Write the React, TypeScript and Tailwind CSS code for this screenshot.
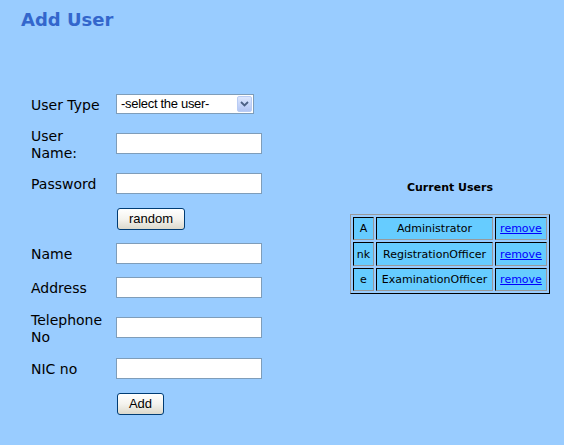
import React from "react";

const labelFont = { fontFamily: '"DejaVu Sans", Verdana, sans-serif' };

function Input() {
  return <div className="w-[146px] h-[21px] bg-white border border-[#7F9DB9] shrink-0" />;
}

function Btn({ children, w }: { children: React.ReactNode; w: string }) {
  return (
    <div
      className={`${w} h-[22px] ml-[1px] border border-[#003C74] rounded-[3px] bg-gradient-to-b from-white via-[#F4F3EE] to-[#DCD9CC] flex items-center justify-center text-[13px] text-black font-['Liberation_Sans',Arial,sans-serif]`}
    >
      {children}
    </div>
  );
}

function Row({ h, mt, label, children }: { h: string; mt: string; label?: React.ReactNode; children: React.ReactNode }) {
  return (
    <div className={`flex items-center ${h} ${mt}`}>
      <div className="w-[85px] shrink-0 text-[14px] leading-[17px] text-black pt-[2px]" style={labelFont}>
        {label}
      </div>
      {children}
    </div>
  );
}

const users = [
  ["A", "Administrator"],
  ["nk", "RegistrationOfficer"],
  ["e", "ExaminationOfficer"],
];

const cell = "p-0 text-center align-middle border border-t-black border-l-black border-r-[#999999] border-b-[#999999] bg-[#66CCFF]";

export default function App() {
  return (
    <div className="w-[564px] h-[445px] bg-[#99CCFF] overflow-hidden">
      <div className="pt-[9px] pl-[21px] text-[18px] leading-[22px] font-bold text-[#3366CC]" style={labelFont}>
        Add User
      </div>
      <div className="flex mt-[63px]">
        <div className="w-[350px] pl-[31px] shrink-0">
          <Row h="h-[20px]" mt="mt-0" label="User Type">
            <div className="w-[138px] h-[20px] bg-white border border-[#7F9DB9] flex items-center justify-between pl-[4px] pr-[1px]">
              <span className="text-[13px] text-black font-['Liberation_Sans',Arial,sans-serif] tracking-[-0.3px]">-select the user-</span>
              <div className="w-[15px] h-[16px] rounded-[2px] border border-[#B9CCF4] bg-gradient-to-b from-[#DDE7FE] to-[#B3C6F4] flex items-center justify-center">
                <svg width="9" height="6" viewBox="0 0 9 6">
                  <path d="M1 1 L4.5 4.5 L8 1" stroke="#4D6185" strokeWidth="1.8" fill="none" />
                </svg>
              </div>
            </div>
          </Row>
          <Row h="h-[21px]" mt="mt-[19px]" label={<>User<br />Name:</>}>
            <Input />
          </Row>
          <Row h="h-[21px]" mt="mt-[19px]" label="Password">
            <Input />
          </Row>
          <Row h="h-[22px]" mt="mt-[14px]">
            <Btn w="w-[68px]">random</Btn>
          </Row>
          <Row h="h-[21px]" mt="mt-[13px]" label="Name">
            <Input />
          </Row>
          <Row h="h-[21px]" mt="mt-[13px]" label="Address">
            <Input />
          </Row>
          <Row h="h-[21px]" mt="mt-[19px]" label={<>Telephone<br />No</>}>
            <Input />
          </Row>
          <Row h="h-[21px]" mt="mt-[20px]" label="NIC no">
            <Input />
          </Row>
          <Row h="h-[22px]" mt="mt-[14px]">
            <Btn w="w-[47px]">Add</Btn>
          </Row>
        </div>
        <div className="w-[200px] mt-[87px] shrink-0" style={labelFont}>
          <div className="text-center text-[11px] leading-[14px] font-bold text-black">Current Users</div>
          <table className="mt-[19px] w-[200px] border-separate border-spacing-[2px] border border-t-[#999999] border-l-[#999999] border-r-black border-b-black text-[11px] leading-[13px] text-black">
            <tbody>
              {users.map(([a, b], i) => {
                const h = i === 1 ? "h-[24px]" : "h-[23px]";
                return (
                  <tr key={a}>
                    <td className={`w-[21px] ${h} ${cell}`}>{a}</td>
                    <td className={`w-[117px] ${h} ${cell}`}>{b}</td>
                    <td className={`w-[52px] ${h} ${cell}`}>
                      <a href="#" className="text-[#0000FF] underline">remove</a>
                    </td>
                  </tr>
                );
              })}
            </tbody>
          </table>
        </div>
      </div>
    </div>
  );
}
